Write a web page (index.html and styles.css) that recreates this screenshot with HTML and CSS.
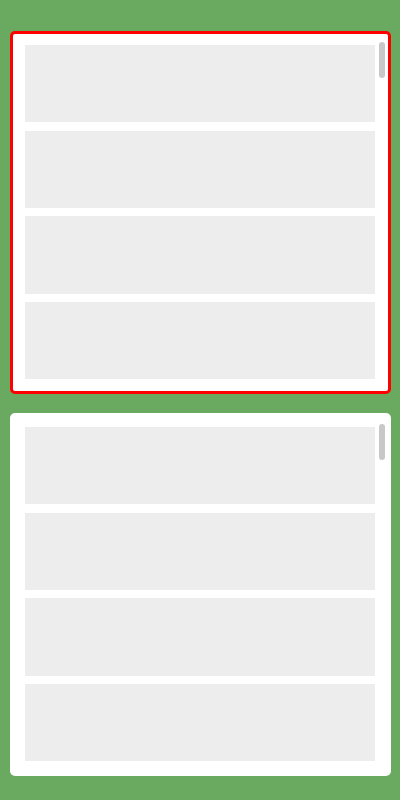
FILE: index.html
```html
<!DOCTYPE html>
<html lang="en">
<head>
<meta charset="utf-8">
<title>Scroll panels</title>
<link rel="stylesheet" href="styles.css">
</head>
<body>
  <section class="panel panel-selected">
    <div class="list">
      <div class="item"></div>
      <div class="item"></div>
      <div class="item"></div>
      <div class="item"></div>
    </div>
    <div class="thumb"></div>
  </section>
  <section class="panel">
    <div class="list">
      <div class="item"></div>
      <div class="item"></div>
      <div class="item"></div>
      <div class="item"></div>
    </div>
    <div class="thumb"></div>
  </section>
</body>
</html>
```
FILE: styles.css
```css
html, body {
  margin: 0;
  height: 100%;
}
body {
  background: #6aaa60;
  padding: 31px 9px 0 10px;
  box-sizing: border-box;
  display: flex;
  flex-direction: column;
  gap: 19px;
  font-family: "Liberation Sans", Arial, sans-serif;
}
.panel {
  position: relative;
  height: 363px;
  flex: 0 0 auto;
  box-sizing: border-box;
  border: 3px solid #ffffff;
  border-radius: 5px;
  background: #ffffff;
  padding: 11px 13px 12px 12px;
  overflow: hidden;
}
.panel-selected {
  border-color: #ff0000;
}
.list {
  display: flex;
  flex-direction: column;
  gap: 8.33px;
}
.item {
  height: 77.33px;
  background: #ededed;
}
.thumb {
  position: absolute;
  top: 8px;
  right: 3px;
  width: 6px;
  height: 36px;
  border-radius: 3px;
  background: #c8c8c8;
}
```
